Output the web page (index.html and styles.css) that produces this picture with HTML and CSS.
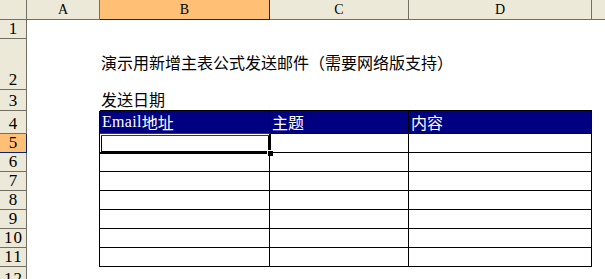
FILE: index.html
```html
<!DOCTYPE html>
<html lang="zh-CN">
<head>
<meta charset="utf-8">
<title>Sheet</title>
<link rel="stylesheet" href="styles.css">
</head>
<body>
<div class="sheet">
  <!-- column headers -->
  <div class="ch corner"></div>
  <div class="ch">A</div>
  <div class="ch sel-h">B</div>
  <div class="ch">C</div>
  <div class="ch">D</div>
  <div class="ch last"></div>

  <!-- row 1 -->
  <div class="rh">1</div>
  <div class="c"></div><div class="c"></div><div class="c"></div><div class="c"></div><div class="c"></div>

  <!-- row 2 -->
  <div class="rh">2</div>
  <div class="c"></div>
  <div class="c txt title">演示用新增主表公式发送邮件（需要网络版支持）</div>
  <div class="c"></div><div class="c"></div><div class="c"></div>

  <!-- row 3 -->
  <div class="rh">3</div>
  <div class="c"></div>
  <div class="c txt tt label">发送日期</div>
  <div class="c tt"></div>
  <div class="c tt"></div>
  <div class="c"></div>

  <!-- row 4 : table header -->
  <div class="rh">4</div>
  <div class="c tl"></div>
  <div class="c t th"><span class="latin">Email</span>地址</div>
  <div class="c t th">主题</div>
  <div class="c t th">内容</div>
  <div class="c"></div>

  <!-- row 5 : selected -->
  <div class="rh sel-h">5</div>
  <div class="c tl"></div>
  <div class="c t active"><span class="sel"></span><span class="handle"></span></div>
  <div class="c t"></div>
  <div class="c t"></div>
  <div class="c"></div>

  <div class="rh">6</div>
  <div class="c tl"></div><div class="c t"></div><div class="c t"></div><div class="c t"></div><div class="c"></div>

  <div class="rh">7</div>
  <div class="c tl"></div><div class="c t"></div><div class="c t"></div><div class="c t"></div><div class="c"></div>

  <div class="rh">8</div>
  <div class="c tl"></div><div class="c t"></div><div class="c t"></div><div class="c t"></div><div class="c"></div>

  <div class="rh">9</div>
  <div class="c tl"></div><div class="c t"></div><div class="c t"></div><div class="c t"></div><div class="c"></div>

  <div class="rh">10</div>
  <div class="c tl"></div><div class="c t"></div><div class="c t"></div><div class="c t"></div><div class="c"></div>

  <div class="rh">11</div>
  <div class="c tl"></div><div class="c t"></div><div class="c t"></div><div class="c t"></div><div class="c"></div>

  <div class="rh rh-top">12</div>
  <div class="c"></div><div class="c"></div><div class="c"></div><div class="c"></div><div class="c"></div>
</div>
</body>
</html>
```

FILE: styles.css
```css
html, body {
  margin: 0;
  padding: 0;
  background: #ffffff;
  overflow: hidden;
}

.sheet {
  width: 605px;
  height: 279px;
  overflow: hidden;
  display: grid;
  grid-template-columns: 27px 73px 170px 139px 183px 1fr;
  grid-template-rows: 20px 19px 51px 21px 23px repeat(7, 19px) 12px;
  font-family: "Noto Sans CJK SC", "Noto Sans", sans-serif;
  background: #ffffff;
}

.ch, .rh {
  box-sizing: border-box;
  background: #ECE9D8;
  border-right: 1px solid #716F64;
  border-bottom: 1px solid #716F64;
  color: #000;
  font-family: "Liberation Serif", "DejaVu Serif", serif;
  display: flex;
  justify-content: center;
}

.ch {
  font-size: 14px;
  align-items: center;
  line-height: 1;
  padding-top: 1px;
}

.ch.last {
  border-right: none;
}

.rh {
  font-size: 17px;
  line-height: 1;
  align-items: flex-end;
  padding-bottom: 1px;
  letter-spacing: 1px;
  padding-left: 1px;
}

.rh-top {
  align-items: flex-start;
  border-bottom: none;
  padding-top: 3px;
  overflow: hidden;
}

.sel-h {
  background: #FFC076;
  border-right-color: #0A246A;
  border-bottom-color: #0A246A;
}

.c {
  box-sizing: border-box;
  position: relative;
  min-width: 0;
}

.txt {
  display: flex;
  align-items: center;
  white-space: nowrap;
  font-size: 16px;
  line-height: 1;
  color: #000;
  padding-left: 1px;
}

.title {
  padding-bottom: 6px;
}

.label {
  padding-bottom: 3px;
}

.tt {
  border-bottom: 1px solid #000;
}

.tl {
  border-right: 1px solid #000;
}

.t {
  border-right: 1px solid #000;
  border-bottom: 1px solid #000;
}

.th {
  background: #000080;
  color: #ffffff;
  font-size: 16px;
  line-height: 1;
  display: flex;
  align-items: center;
  white-space: nowrap;
  padding-left: 2px;
}

.latin {
  font-family: "Liberation Serif", "DejaVu Serif", serif;
  font-size: 16px;
  letter-spacing: 0.3px;
}

.sel {
  position: absolute;
  left: -1px;
  top: -1px;
  right: -2px;
  bottom: -2px;
  border: 3px double #000;
  border-top-color: #3a3a2a;
}

.handle {
  position: absolute;
  right: -4px;
  bottom: -4px;
  width: 5px;
  height: 5px;
  background: #000;
  outline: 1px solid #fff;
}
```
